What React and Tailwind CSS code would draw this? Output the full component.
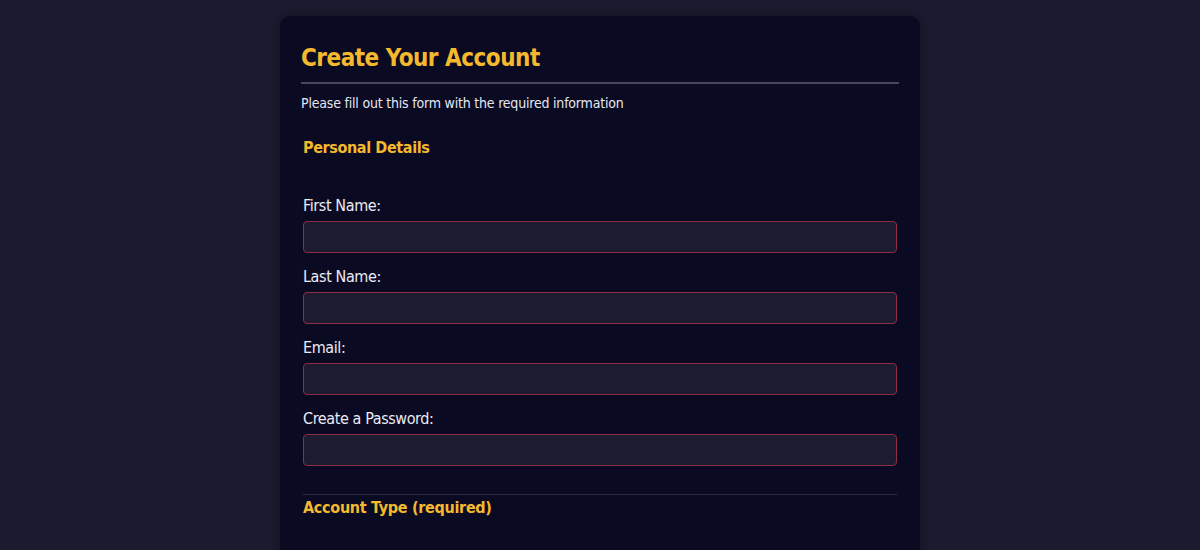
const fields = [
  { id: "firstName", label: "First Name:", type: "text" },
  { id: "lastName", label: "Last Name:", type: "text" },
  { id: "email", label: "Email:", type: "email" },
  { id: "password", label: "Create a Password:", type: "password" },
]

const App = () => {
  return (
    <div
      className="min-h-screen bg-[#1b1b30] pt-4"
      style={{ fontFamily: '"DejaVu Sans Condensed", "DejaVu Sans", sans-serif' }}
    >
      <div className="mx-auto w-[640px] rounded-[10px] bg-[#0a0a22] px-[21px] pt-[26px] pb-10 shadow-[0_0_10px_rgba(0,0,0,0.35)]">
        <h1 className="border-b-2 border-[#48485e] pb-[8px] text-[24px] leading-[32px] font-bold tracking-[-0.5px] text-[#f5b92e]">
          Create Your Account
        </h1>
        <p className="mt-[9px] text-[14px] leading-[20px] tracking-[-0.2px] text-[#e6e6f2]">
          Please fill out this form with the required information
        </p>

        <form>
          <fieldset className="mx-[2px] mt-[24px]">
            <legend className="text-[16px] leading-[22px] font-bold tracking-[-0.38px] text-[#f5b92e]">
              Personal Details
            </legend>
            <div className="pt-[36px]">
              {fields.map((f) => (
                <div key={f.id} className="mb-[13px]">
                  <label htmlFor={f.id} className="block text-[16px] leading-[22px] tracking-[-0.4px] text-[#ececf6]">
                    {f.label}
                  </label>
                  <input
                    id={f.id}
                    type={f.type}
                    className="mt-[4px] block h-[32px] w-full rounded-[4px] border border-[#8a2d45] bg-[#1c1c31] px-2 text-white outline-none"
                  />
                </div>
              ))}
            </div>
          </fieldset>

          <fieldset className="mx-[2px] mt-[15px] border-t border-[#2a2a40] pt-[2px]">
            <legend className="float-left text-[16px] leading-[22px] font-bold tracking-[-0.3px] text-[#f5b92e]">
              Account Type (required)
            </legend>
          </fieldset>
        </form>
      </div>
    </div>
  )
}

export default App
